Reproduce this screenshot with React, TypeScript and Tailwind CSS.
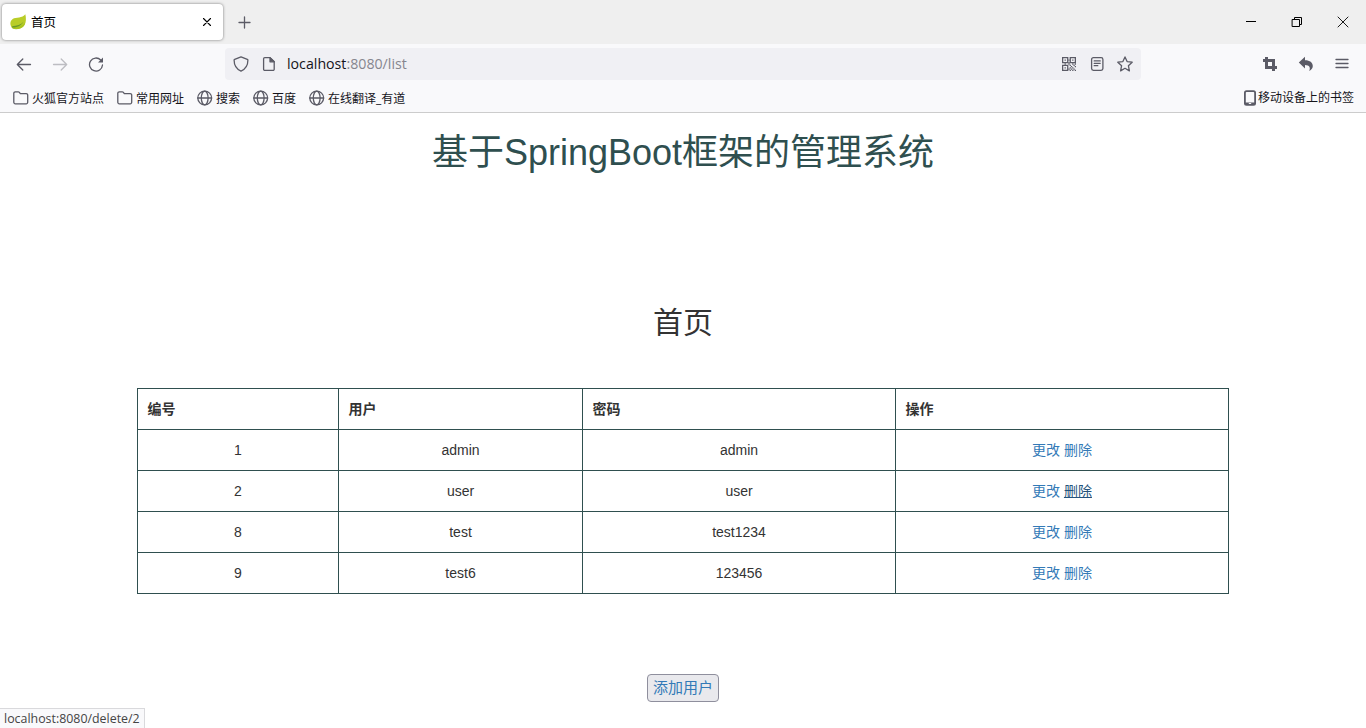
import type { ReactNode } from "react";
import { clsx } from "clsx";

interface User {
  id: number;
  name: string;
  password: string;
}

const users: User[] = [
  { id: 1, name: "admin", password: "admin" },
  { id: 2, name: "user", password: "user" },
  { id: 8, name: "test", password: "test1234" },
  { id: 9, name: "test6", password: "123456" },
];

const HOVERED_ID = 2;

function Icon({ size = 16, className, children }: { size?: number; className?: string; children: ReactNode }) {
  return (
    <svg
      width={size}
      height={size}
      viewBox={`0 0 ${size} ${size}`}
      fill="none"
      stroke="currentColor"
      strokeWidth="1.3"
      strokeLinecap="round"
      strokeLinejoin="round"
      className={clsx("block shrink-0", className)}
    >
      {children}
    </svg>
  );
}

function FolderIcon() {
  return (
    <Icon>
      <path d="M.8 3.3a1.5 1.5 0 0 1 1.5-1.5h2.9c.5 0 .9.2 1.2.6l.9 1.2h5.9a1.5 1.5 0 0 1 1.5 1.5v7.2a1.5 1.5 0 0 1-1.5 1.5H2.3a1.5 1.5 0 0 1-1.5-1.5z" />
    </Icon>
  );
}

function GlobeIcon() {
  return (
    <Icon>
      <circle cx="7.700" cy="8" r="6.900" />
      <ellipse cx="7.700" cy="8" rx="3.400" ry="6.900" />
      <path d="M.8 8h13.800" />
    </Icon>
  );
}

function LeafIcon() {
  return (
    <svg width="16" height="16" viewBox="0 0 16 16" className="block shrink-0">
      <path d="M15.3.3c1 4 .9 8.800-1.400 11.600-2.600 3-8 3.600-11.700 2.100C-.3 11.500-.3 7.200 2.700 5 5.900 2.900 12.500 4.500 15.300.3z" fill="#b9cd28" />
      <path d="M2.200 14.500c3.700 1.300 8.700.7 11.300-2.300.9-1 1.500-2.300 1.800-3.700-2.300 3.300-6.700 4-10.800 4z" fill="#a9c41f" />
      <path d="M1.700 13.500c4.500.2 9-1 11.900-5.700-2.600 3-7 4.200-11.400 4.400z" fill="#6b9a2a" />
    </svg>
  );
}

function QrIcon() {
  return (
    <svg width="14" height="14" viewBox="0 0 11 11" fill="currentColor" className="mr-px block shrink-0">
      <path fillRule="evenodd" d="M0 0h5v5H0zM1 1v3h3V1zM6 0h5v5H6zM7 1v3h3V1zM0 6h5v5H0zM1 7v3h3V7z" />
      <path d="M2 2h1v1H2zM8 2h1v1H8zM2 8h1v1H2zM5 2h1v1H5zM5 4h1v2H5zM2 5h1v1H2zM8 5h1v1H8zM10 5h1v1h-1zM6 6h1v1H6zM7 7h1v1H7zM9 6h1v1H9zM8 8h1v1H8zM10 7h1v1h-1zM6 8h1v1H6zM7 9h1v1H7zM9 9h1v1H9zM6 10h1v1H6zM8 10h1v1H8zM10 10h1v1h-1zM5 9h1v1H5z" />
    </svg>
  );
}

function TabStrip() {
  return (
    <div className="flex h-11 items-start bg-[#efefef] text-black">
      <div className="ml-0.5 mt-1 flex h-9 w-[221px] items-center rounded bg-white pl-2 pr-2.5 shadow-[0_0_3px_rgba(0,0,0,0.5)]">
        <LeafIcon />
        <span className="ml-[5px] flex-1 pt-0.5 text-[12.5px] leading-4">首页</span>
        <Icon size={12}>
          <path d="M2.500 2.500l7 7M9.500 2.500l-7 7" strokeWidth="1.100" />
        </Icon>
      </div>
      <Icon className="ml-3.5 mt-[15px] text-[#5b5b66]">
        <path d="M7.500 2v11M2 7.500h11" />
      </Icon>
      <div className="ml-auto mr-[17px] mt-4 flex gap-[34px]">
        <Icon size={12}>
          <path d="M1 5.500h10" strokeWidth="1" strokeLinecap="butt" shapeRendering="crispEdges" />
        </Icon>
        <Icon size={12}>
          <path d="M1.500 3.500h7v7h-7zM3.500 3.500v-2h7v7h-2" strokeWidth="1" strokeLinejoin="miter" />
        </Icon>
        <Icon size={12}>
          <path d="M1 1l10 10M11 1L1 11" strokeWidth=".9" />
        </Icon>
      </div>
    </div>
  );
}

function NavBar() {
  return (
    <div className="flex h-10 items-center bg-[#f9f9fb] text-[#5b5b66]">
      <div className="flex w-[225px] gap-5 pl-4">
        <Icon>
          <path d="M14.500 8.500H1.500M6.800 3l-5.500 5.500L6.800 14" />
        </Icon>
        <Icon className="text-[#bdbdc2]">
          <path d="M1.500 8.500h13M9.200 3l5.500 5.500L9.200 14" />
        </Icon>
        <Icon>
          <path d="M12.700 4A6.500 6.500 0 1 0 14.500 9" />
          <path d="M15 1.600v5H10z" fill="currentColor" stroke="none" />
        </Icon>
      </div>
      <div className="flex h-8 w-[916px] items-center rounded bg-[#f0f0f4] px-2">
        <Icon>
          <path d="M8 .9l6.300 2.400c.4.200.6.400.6.800 0 5-2 9-6.900 11-4.900-2-6.900-6-6.900-11 0-.4.200-.6.600-.8z" />
        </Icon>
        <Icon className="ml-3">
          <path d="M3.800 1.600H9L13.200 5.800v7.400a1.200 1.200 0 0 1-1.200 1.200H3.800a1.200 1.200 0 0 1-1.200-1.200V2.800a1.200 1.200 0 0 1 1.200-1.200z" />
          <path d="M9 1.600l4.200 4.200H9z" fill="currentColor" />
        </Icon>
        <span className="ml-2.5 flex-1 text-[14.2px] leading-5 text-[#86868f]">
          <span className="text-[#15141a]">localhost</span>:8080/list
        </span>
        <div className="flex items-center gap-3">
          <QrIcon />
          <Icon>
            <rect x="2.600" y="1.600" width="11.300" height="12.800" rx="1.800" />
            <path d="M5.200 4.900h6M5.200 7.300h6M5.200 9.700h3.600" />
          </Icon>
          <Icon>
            <path d="M8 .9l2.100 4.700 5.100.6-3.800 3.500 1 5.200L8 12.300l-4.400 2.600 1-5.200L.8 6.200l5.100-.6z" />
          </Icon>
        </div>
      </div>
      <div className="ml-auto mr-4 flex items-center gap-5">
        <Icon>
          <path d="M4.500 1v10.500H15M1 4.500h10.500V15" strokeWidth="3" strokeLinecap="butt" strokeLinejoin="miter" />
        </Icon>
        <Icon>
          <path d="M.8 6.500L7 .8v3.400c5 0 7.800 2.200 7.800 5.800 0 2.100-1.200 3.800-3.600 5 1.500-3.200.4-5.700-4.200-5.900v3.300z" fill="currentColor" stroke="none" />
        </Icon>
        <Icon>
          <path d="M2 3.500h12M2 7.500h12M2 11.500h12" />
        </Icon>
      </div>
    </div>
  );
}

function Bookmark({ icon, label }: { icon: ReactNode; label: string }) {
  return (
    <div className="flex items-center gap-[3px] text-[#5b5b66]">
      {icon}
      <span className="whitespace-nowrap pt-px text-xs text-[#15141a]">{label}</span>
    </div>
  );
}

function BookmarksBar() {
  return (
    <div className="flex h-[29px] items-center justify-between border-b border-[#cccccc] bg-[#f9f9fb] pl-[13px] pr-3">
      <div className="flex gap-[13px]">
        <Bookmark icon={<FolderIcon />} label="火狐官方站点" />
        <Bookmark icon={<FolderIcon />} label="常用网址" />
        <Bookmark icon={<GlobeIcon />} label="搜索" />
        <Bookmark icon={<GlobeIcon />} label="百度" />
        <Bookmark icon={<GlobeIcon />} label="在线翻译_有道" />
      </div>
      <div className="flex items-center text-[#5b5b66]">
        <Icon>
          <rect x="2.900" y="1.200" width="10.200" height="13.600" rx="1.600" strokeWidth="1.800" />
          <path d="M3 13.200h10" strokeWidth="1.600" />
          <path d="M7.200 13.500h1.600" stroke="#f9f9fb" strokeWidth="1" />
        </Icon>
        <span className="whitespace-nowrap text-xs text-[#15141a]">移动设备上的书签</span>
      </div>
    </div>
  );
}

function UserTable() {
  const cell = "h-[41px] border-b border-r border-[#2f4f4f] p-0";

  return (
    <table className="mt-[49px] w-[1092px] table-fixed border-separate border-spacing-0 border-l border-t border-[#2f4f4f] text-sm leading-5">
      <colgroup>
        <col className="w-[201px]" />
        <col className="w-[244px]" />
        <col className="w-[313px]" />
        <col className="w-[333px]" />
      </colgroup>
      <thead>
        <tr>
          {["编号", "用户", "密码", "操作"].map((title) => (
            <th key={title} className={clsx(cell, "pl-[9.5px] text-left font-bold")}>
              {title}
            </th>
          ))}
        </tr>
      </thead>
      <tbody className="text-center">
        {users.map((user) => (
          <tr key={user.id}>
            <td className={cell}>{user.id}</td>
            <td className={cell}>{user.name}</td>
            <td className={cell}>{user.password}</td>
            <td className={cell}>
              <a href="#update" className="text-[#337ab7]">更改</a>{" "}
              <a
                href="#delete"
                className={user.id === HOVERED_ID ? "text-[#23527c] underline" : "text-[#337ab7]"}
              >
                删除
              </a>
            </td>
          </tr>
        ))}
      </tbody>
    </table>
  );
}

export default function App() {
  return (
    <div className="flex h-[728px] w-[1366px] flex-col overflow-hidden bg-white font-['Open_Sans','Noto_Sans_CJK_SC',sans-serif]">
      <TabStrip />
      <NavBar />
      <BookmarksBar />
      <main className="relative flex flex-1 flex-col items-center font-['Liberation_Sans','Noto_Sans_CJK_SC',sans-serif] text-[#333333]">
        <h1 className="mt-5 h-10 whitespace-nowrap text-[36px] leading-10 text-[#2f4f4f]">基于SpringBoot框架的管理系统</h1>
        <h2 className="mt-[133px] h-[33px] text-[30px] leading-[33px]">首页</h2>
        <UserTable />
        <button
          type="button"
          className="mt-20 h-7 w-[72px] rounded border border-[#8f8f9d] bg-[#e9e9ed] text-[15px] leading-5 text-[#337ab7]"
        >
          添加用户
        </button>
        <div className="absolute bottom-0 left-0 flex h-5 w-[145px] items-center whitespace-nowrap border-r border-t border-[#d9d9dc] bg-[#f9f9fb] pl-1 pt-px font-['Open_Sans',sans-serif] text-[12.4px] text-[#444444]">
          localhost:8080/delete/2
        </div>
      </main>
    </div>
  );
}
